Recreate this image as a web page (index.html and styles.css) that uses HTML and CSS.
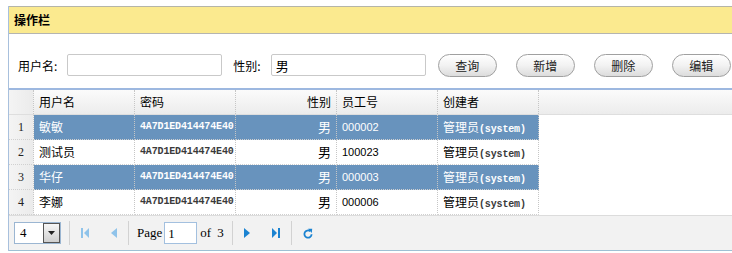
FILE: index.html
```html
<!DOCTYPE html>
<html lang="zh">
<head>
    <meta charset="UTF-8">
    <title>用户管理</title>
    <link rel="stylesheet" href="styles.css">
</head>
<body>
    <div class="panel">
        <div class="panel-title">操作栏</div>
        <div class="toolbar">
            <label class="field-label">用户名:</label>
            <input type="text" class="field-input" value="">
            <label class="field-label sex-label">性别:</label>
            <input type="text" class="field-input" value="男">
            <button class="pill-btn">查询</button>
            <button class="pill-btn">新增</button>
            <button class="pill-btn">删除</button>
            <button class="pill-btn">编辑</button>
        </div>
        <div class="grid">
            <div class="grid-row grid-head">
                <div class="cell num"></div>
                <div class="cell">用户名</div>
                <div class="cell">密码</div>
                <div class="cell right">性别</div>
                <div class="cell">员工号</div>
                <div class="cell">创建者</div>
                <div class="cell filler"></div>
            </div>
            <div class="grid-row selected">
                <div class="cell num">1</div>
                <div class="cell">敏敏</div>
                <div class="cell mono">4A7D1ED414474E40</div>
                <div class="cell right sex">男</div>
                <div class="cell code">000002</div>
                <div class="cell">管理员<span class="mono">(system)</span></div>
            </div>
            <div class="grid-row">
                <div class="cell num">2</div>
                <div class="cell">测试员</div>
                <div class="cell mono">4A7D1ED414474E40</div>
                <div class="cell right sex">男</div>
                <div class="cell code">100023</div>
                <div class="cell">管理员<span class="mono">(system)</span></div>
            </div>
            <div class="grid-row selected">
                <div class="cell num">3</div>
                <div class="cell">华仔</div>
                <div class="cell mono">4A7D1ED414474E40</div>
                <div class="cell right sex">男</div>
                <div class="cell code">000003</div>
                <div class="cell">管理员<span class="mono">(system)</span></div>
            </div>
            <div class="grid-row">
                <div class="cell num">4</div>
                <div class="cell">李娜</div>
                <div class="cell mono">4A7D1ED414474E40</div>
                <div class="cell right sex">男</div>
                <div class="cell code">000006</div>
                <div class="cell">管理员<span class="mono">(system)</span></div>
            </div>
        </div>
        <div class="pager">
            <div class="page-size">
                <span class="size-value">4</span>
                <span class="size-arrow">
                    <svg width="7" height="4" viewBox="0 0 7 4"><path d="M0 0H7L3.5 4Z" fill="#222"/></svg>
                </span>
            </div>
            <span class="sep first-sep"></span>
            <span class="pg-btn">
                <svg width="8" height="10" viewBox="0 0 8 10"><rect x="0" y="0" width="2" height="10" fill="#8fc3ea"/><path d="M8 0V10L3 5Z" fill="#8fc3ea"/></svg>
            </span>
            <span class="pg-btn">
                <svg width="6" height="10" viewBox="0 0 6 10"><path d="M6 0V10L0 5Z" fill="#8fc3ea"/></svg>
            </span>
            <span class="sep"></span>
            <span class="pg-text page-word">Page</span>
            <input type="text" class="page-input" value="1">
            <span class="pg-text of-word">of&nbsp;3</span>
            <span class="sep"></span>
            <span class="pg-btn">
                <svg width="6" height="10" viewBox="0 0 6 10"><path d="M0 0V10L6 5Z" fill="#1b83d1"/></svg>
            </span>
            <span class="pg-btn">
                <svg width="8" height="10" viewBox="0 0 8 10"><path d="M0 0V10L5 5Z" fill="#1b83d1"/><rect x="6" y="0" width="2" height="10" fill="#1b83d1"/></svg>
            </span>
            <span class="sep"></span>
            <span class="pg-btn">
                <svg width="10" height="11" viewBox="0 0 10 11"><path d="M7.2 3.2A3.6 3.6 0 1 0 8.6 6.3" fill="none" stroke="#1b83d1" stroke-width="1.8"/><path d="M5 0.8L9.2 0.8L8.8 5Z" fill="#1b83d1"/></svg>
            </span>
        </div>
    </div>
</body>
</html>
```

FILE: styles.css
```css
body {
    margin: 0;
    overflow: hidden;
    font-family: "Noto Sans CJK SC", "Liberation Sans", sans-serif;
    font-size: 12px;
    color: #000;
    background: #fff;
}
.panel {
    margin: 6px 0 0 8px;
    width: 740px;
    border-left: 1px solid #a8c0dd;
}
.panel-title {
    height: 26px;
    line-height: 26px;
    padding-left: 5px;
    background: #fbea8f;
    border-top: 1px solid #b5b5a8;
    border-bottom: 1px solid #b5b5b0;
    font-weight: bold;
    font-size: 12px;
}
.toolbar {
    height: 56px;
    display: flex;
    align-items: center;
    padding: 8px 0 0 9px;
    box-sizing: border-box;
    border-bottom: 2px solid #9db8e0;
}
.field-label {
    margin-right: 10px;
}
.sex-label {
    margin-left: 11px;
}
.field-input {
    width: 155px;
    height: 22px;
    box-sizing: border-box;
    border: 1px solid #c9c9c9;
    border-radius: 2px;
    padding: 0 4px;
    font-family: "Noto Sans CJK SC", sans-serif;
    font-size: 13px;
    outline: none;
}
.pill-btn {
    width: 59px;
    height: 23px;
    margin-left: 12px;
    margin-right: 7px;
    border: 1px solid #a0a0a0;
    border-radius: 12px;
    background: linear-gradient(#ffffff, #f2f2f2 50%, #dcdcdc);
    font-family: "Noto Sans CJK SC", sans-serif;
    font-size: 12px;
    color: #222;
    padding: 0;
}
.grid-row {
    display: flex;
    height: 25px;
    line-height: 24px;
}
.grid-head {
    background: linear-gradient(#fbfbfb, #ececec);
    border-bottom: 1px solid #dedede;
    height: 24px;
}
.cell {
    width: 101px;
    box-sizing: border-box;
    padding: 0 5px;
    border-right: 1px dotted #c6c6c6;
    border-bottom: 1px dotted #d0d0d0;
    white-space: nowrap;
    overflow: hidden;
}
.grid-head .cell {
    border-bottom: none;
}
.cell.filler {
    flex: 1;
    border-right: none;
}
.cell.num {
    width: 25px;
    padding: 0;
    text-align: center;
    font-family: "Liberation Serif", serif;
    font-size: 12px;
    background: linear-gradient(90deg, #f4f4f4, #ebebeb);
    color: #222;
}
.cell.right {
    text-align: right;
}
.cell.sex {
    font-size: 13px;
}
.mono {
    font-family: "Liberation Mono", monospace;
    font-size: 10px;
    font-weight: bold;
    letter-spacing: -0.15px;
    color: #3a3a3a;
}
.cell.mono {
    padding-right: 0;
}
.cell.code {
    font-family: "Liberation Sans", sans-serif;
    font-size: 11px;
}
.selected .cell,
.selected .mono {
    background: #6893bd;
    color: #fff;
}
.selected .cell.num {
    background: linear-gradient(90deg, #f4f4f4, #ebebeb);
    color: #222;
}
.pager {
    display: flex;
    align-items: center;
    height: 36px;
    background: #f2f2f2;
    border-top: 1px solid #dcdcdc;
    border-bottom: 1px solid #9ec0d4;
    padding-left: 5px;
    box-sizing: border-box;
    font-family: "Liberation Serif", serif;
    font-size: 13px;
}
.page-size {
    display: flex;
    width: 47px;
    height: 22px;
    box-sizing: border-box;
    border: 1px solid #9bb6d2;
    background: #fff;
}
.size-value {
    flex: 1;
    padding-left: 5px;
    line-height: 20px;
}
.size-arrow {
    width: 17px;
    display: flex;
    align-items: center;
    justify-content: center;
    background: linear-gradient(#f6f6f6, #cfcfcf);
    border: 1px solid #555;
    box-sizing: border-box;
}
.sep {
    width: 1px;
    height: 24px;
    background: #d2d2d2;
}
.first-sep {
    margin-left: 8px;
}
.pg-btn {
    display: flex;
    margin: 0 11px;
}
.page-word {
    margin: 0 2px 0 8px;
}
.of-word {
    margin: 0 8px 0 3px;
    word-spacing: 3px;
}
.page-input {
    width: 33px;
    height: 22px;
    box-sizing: border-box;
    border: 1px solid #a3c0df;
    font-family: "Liberation Serif", serif;
    font-size: 13px;
    padding: 2px 3px 0;
    outline: none;
    background: #fff;
}
```
